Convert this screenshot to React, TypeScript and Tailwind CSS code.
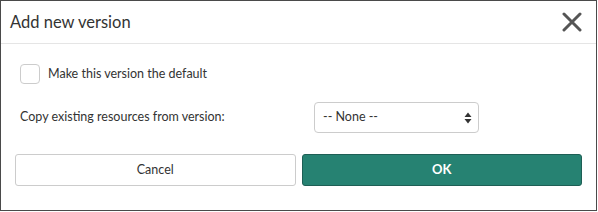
export default function App() {
  return (
    <div className="w-[597px] h-[211px] border border-[#4a4a4a] bg-white text-[#333] font-['Lato','Liberation_Sans',sans-serif]">
      <div className="h-[43px] flex items-center justify-between pl-[9px] pr-[14px] border-b border-[#e5e5e5]">
        <h1 className="text-[16.5px] leading-none">Add new version</h1>
        <button className="w-[20px] h-[20px] flex items-center justify-center">
          <svg width="20" height="20" viewBox="0 0 20 20">
            <path d="M2 2 L18 18 M18 2 L2 18" stroke="#555" strokeWidth="3" strokeLinecap="round" />
          </svg>
        </button>
      </div>

      <div className="pt-[20px] pl-[19px] flex items-center gap-[8px]">
        <span className="w-[20px] h-[20px] rounded-[4px] border border-[#ccc] bg-white" />
        <span className="text-[12.5px]">Make this version the default</span>
      </div>

      <div className="mt-[18px] pl-[19px] flex items-center">
        <span className="w-[294px] text-[12.5px]">Copy existing resources from version:</span>
        <div className="w-[165px] h-[31px] rounded-[4px] border border-[#ccc] flex items-center justify-between pl-[8px] pr-[6px]">
          <span className="text-[12.5px]">-- None --</span>
          <svg width="8" height="12" viewBox="0 0 8 12">
            <path d="M4 0.5 L7.5 5 L0.5 5 Z M4 11.5 L7.5 7 L0.5 7 Z" fill="#333" />
          </svg>
        </div>
      </div>

      <div className="mt-[21px] px-[14px] flex gap-[6px]">
        <button className="flex-1 h-[32px] rounded-[3px] border border-[#ccc] bg-white text-[12.5px] text-[#333]">
          Cancel
        </button>
        <button className="flex-1 h-[32px] rounded-[3px] border border-[#1e5f55] bg-[#268272] text-[13px] font-bold text-white">
          OK
        </button>
      </div>
    </div>
  );
}
